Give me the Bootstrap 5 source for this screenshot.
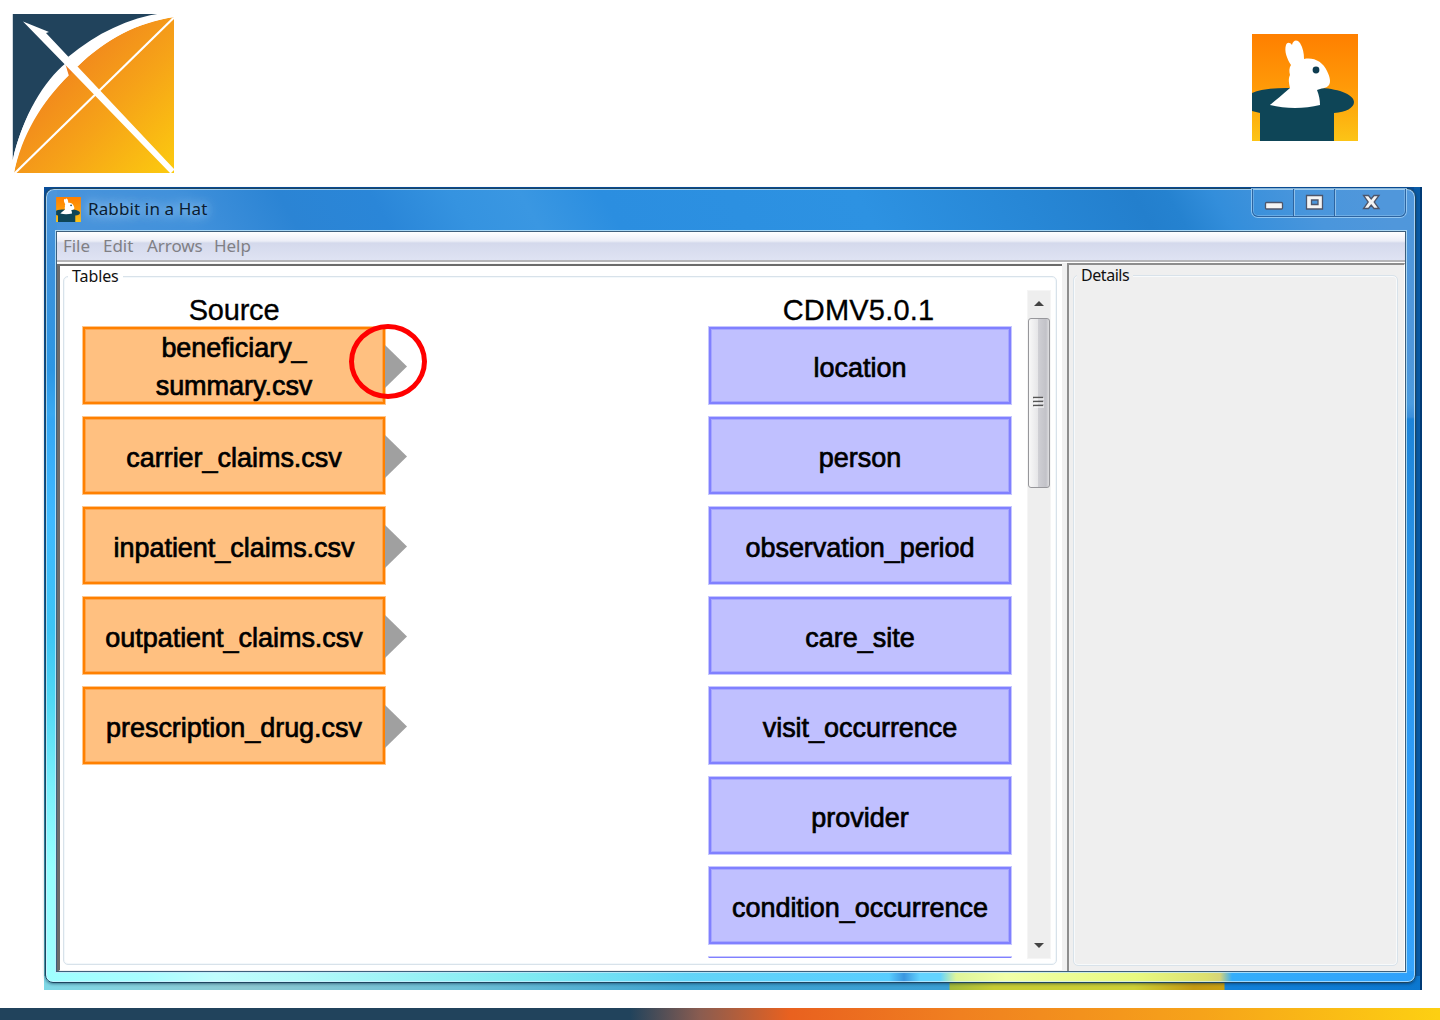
<!DOCTYPE html>
<html lang="en">
<head>
<meta charset="utf-8">
<title>Rabbit in a Hat</title>
<link href="https://cdn.jsdelivr.net/npm/bootstrap@5.3.0/dist/css/bootstrap.min.css" rel="stylesheet">
<script src="https://cdn.jsdelivr.net/npm/bootstrap@5.3.0/dist/js/bootstrap.bundle.min.js"></script>
<style>
body{width:1440px;height:1020px;font-family:"Noto Sans","Open Sans",sans-serif;background:#fff}
svg{display:block}
.slide-head{height:187px;padding:13px 80px 0 12px}
.logo-hat{margin-top:19px}
.desk{width:1378px;height:803px;margin-left:44px;padding:1px 6px 7px 1px;
 background:
  linear-gradient(90deg,transparent 1376px,#003a75 1376px),
  linear-gradient(90deg,transparent 0 905px,#a3b93a 906px,#c6cc33 950px,#cdd035 1090px,#c49a12 1150px,#c9a010 1180px,transparent 1181px) 0 100%/100% 14px no-repeat,
  linear-gradient(90deg,#7fd8e6,#8cc9d2 200px,#6cbfd6 420px,#3fa3cf 640px,#3a9fd4 900px,#1180d8 1190px,#0b77cf) 0 100%/100% 14px no-repeat,
  linear-gradient(90deg,transparent 1370px,#0a5ba5 1370px),
  linear-gradient(#0a4f9a,#0b61aa 45%,#2d87a8 75%,#5fb3c0)}
.win{width:1371px;height:795px;padding:0 9px 0 10px;border:1px solid #1d4560;border-radius:9px 9px 8px 8px;
 box-shadow:inset 0 0 0 1px rgba(215,240,255,.65),0 1px 3px rgba(0,30,60,.5);
 background:
  linear-gradient(90deg,#9fffff,#a8fdff 100px,#c0fdfd 170px,#b4fafa 250px,#7feaf2 480px,#62d4f8 640px,#58cdff 843px,#3a96e0 858px,#62d3ff 874px,#62d3ff 894px,#dff59a 910px,#f0ffa8 960px,#e8fa80 1090px,#dce070 1160px,#d6d478 1174px,#35aefb 1186px,#2ea0fb) 0 100%/100% 11px no-repeat,
  linear-gradient(#4d96db,#3f91da 60px,#2c96e4 180px,#38a8f2 225px,#34a6f4 230px,#3eb9ff 330px,#3cc4f5 440px,#4fd8f4 510px,#7af0fb 600px,#95ffff 680px,#a0ffff) 0 0/11px 100% no-repeat,
  linear-gradient(#5097db,#4f97db 170px,#4a9ce0 215px,#3a8fdc 228px,#1d84d9 230px,#2b96ea 420px,#2e9dfa 600px,#36a4fc) 100% 0/11px 100% no-repeat,
  linear-gradient(60deg,#4a94db 0,#4191db 130px,#2b84d4 220px,#2a86d8 300px,#3593e0 370px,#3a97e2 430px,#2b8ee0 500px,#2d92e2 720px,#2787d6 860px,#237fcd 960px,#2582d0 990px,#338edb 1030px,#4a96dc 1110px,#5097db 1170px) 0 0/100% 43px no-repeat}
.titlebar{height:42px;flex:none}
.win-title{font-size:17px;letter-spacing:.13px;line-height:24px;color:#0a1c30;margin:8px 0 0 7px;text-shadow:0 0 10px rgba(190,225,255,.9),0 0 16px rgba(190,225,255,.8)}
.caption-btns{height:28px;width:154px;border:1px solid #2d64a0;border-top:0;border-radius:0 0 6px 6px;box-shadow:0 0 0 1px rgba(170,215,250,.75),inset 0 0 0 1px rgba(150,200,240,.45)}
.client{height:741px;border:1px solid #3d5f7c;box-shadow:0 0 0 1px rgba(195,232,250,.8);background:#f6f6f6;overflow:hidden}
.menu-strip{height:28px;flex:none;padding-left:6px;font-size:17px;line-height:28px;color:#808085;background:linear-gradient(#fff,#eceef7 9px,#d4d9ec 11px,#dfe3f3)}
.menu-strip span{letter-spacing:-.05px;white-space:nowrap}
.menu-base{height:3px;flex:none;background:linear-gradient(#b5b5b8 2px,#fff 2px)}
.pane-l{width:1005px;background:#fff;border-left:3px solid #6b6b6b;border-top:2px solid #6b6b6b;border-bottom:2px solid #f1efef;margin-top:1px}
.splitter{width:5px;background:#f0f0f0}
.pane-r{background:#efefef;border-left:2px solid #8d8d8d;border-top:2px solid #8d8d8d;border-right:1px solid #fff;border-bottom:1px solid #fff}
.groupbox{border:1px solid #d8e2ea;border-radius:5px;box-shadow:inset 0 0 0 1px rgba(240,246,250,.8)}
.group-l{margin:10px 5px 5px 3px;padding:0 5px 5px 18px}
.group-r{margin:10px 6px 5px 4px;box-shadow:inset 0 0 0 1px #f8fafb}
.cap-text{position:absolute;top:-12px;left:4px;padding:0 4px;font-size:16px;line-height:22px;letter-spacing:-.45px;color:#111}
.group-l>.cap-text{background:linear-gradient(transparent 6px,#fff 6px);letter-spacing:-.1px}
.group-r>.cap-text{background:linear-gradient(transparent 6px,#efefef 6px);left:3px}
.map-col{width:304px;padding-top:16px;height:681px;font-family:"Liberation Sans",Arial,sans-serif;color:#000}
.map-cdm{overflow:hidden}
.map-src{width:326px;padding-right:22px}
.map-head{font-size:29px;line-height:35px;height:33px;letter-spacing:-.2px;-webkit-text-stroke:.3px #000}
.map-cdm>.map-head{letter-spacing:.2px;padding-right:3px}
.tbl-box{height:77px;margin:1px 1px 12px;flex:none;font-size:27px;letter-spacing:-.03px;line-height:38px;-webkit-text-stroke:.7px #000;padding-top:4px}
.tbl-src{background:#ffc080;border:2px solid #ff8000;box-shadow:0 0 0 1px rgba(255,128,0,.45),inset 0 0 0 1px rgba(255,128,0,.4)}
.tbl-cdm{background:#c0c0ff;border:2px solid #8080ff;box-shadow:0 0 0 1px rgba(128,128,255,.45),inset 0 0 0 1px rgba(128,128,255,.4)}
.tip{position:absolute;left:300px;top:16px;width:22px;height:43px;background:#a0a0a0;clip-path:polygon(0 0,100% 50%,0 100%)}
.ring{position:absolute;left:264px;top:-5px;width:78px;height:75px;border:5.5px solid #f00;border-radius:50%;z-index:2}
.scroller{width:24px;height:669px;margin:13px 0 0 15px;background:#eee;border:1px solid #f5f5f5}
.thumb{width:22px;height:170px;border:1.5px solid #97979b;border-radius:3px;background:linear-gradient(90deg,#f8f8f8,#e6e6e8 44%,#cfcfd4 46%,#c2c2c8 85%,#dedee0)}
.foot{height:12px;margin-top:18px;background:linear-gradient(90deg,#21435c 0,#21435c 630px,#8a5c50 700px,#e9611f 790px,#f08020 960px,#f6a31a 1200px,#fdd012 1440px)}
</style>
</head>
<body class="overflow-hidden d-flex flex-column">
<svg width="0" height="0" class="position-absolute">
 <defs>
  <linearGradient id="hatbg" x1="0" y1="0" x2="0" y2="1"><stop offset="0" stop-color="#ff7f00"/><stop offset=".5" stop-color="#ff9a08"/><stop offset="1" stop-color="#fcc416"/></linearGradient>
  <symbol id="hat" viewBox="0 0 106 107">
   <rect width="106" height="107" fill="url(#hatbg)"/>
   <path fill="#0e4557" d="M0 59C10 55 22 54 34 54H66C84 54 102 60 102 68C102 74 94 78 82 79V107H8V79L0 77Z"/>
   <path fill="#fff" d="M39 31C35 25 32 17 34 11C35 8 38 8 40 11C41 6 45 5 48 9C51 14 52 19 52 25C62 23 71 28 75 37C78 43 79 48 77 51C74 55 69 54 65 56C67 61 68 66 68 71C52 75 34 75 18 71C24 66 31 60 38 54C37 49 36 45 38 41C37 37 37 34 39 31Z"/>
   <circle cx="64" cy="36" r="3.4" fill="#0e3c50"/>
  </symbol>
 </defs>
</svg>

<header class="slide-head d-flex justify-content-between align-items-start flex-shrink-0">
 <svg width="163" height="161" viewBox="0 0 163 161">
  <defs><linearGradient id="bow" x1=".2" y1=".25" x2="1" y2="1"><stop offset="0" stop-color="#f07f1e"/><stop offset=".5" stop-color="#f6a318"/><stop offset="1" stop-color="#fccb0f"/></linearGradient></defs>
  <path fill="#21435c" d="M.8 1H151C75 17 18 70 .8 147Z"/>
  <path fill="url(#bow)" d="M2 160C10 122 29 90 57 62L53 50 66 53C94 26 126 9 162 4V160Z"/>
  <path fill="#fff" d="M.8 147C11 102 32 68 54 50L57 62C28 90 9 122 2 160ZM56 44C85 20 116 5 151 0H162V4C125 10 93 26 65 54Z"/>
  <path fill="#ef7d1e" d="M53 50L62 56 57 63Z"/>
  <path stroke="#fff" stroke-width="2.2" d="M2.500 160.500L162 4.500"/>
  <path fill="#fff" d="M11 8.500L37 19 34 20 162.500 156.500 158.500 160.500 50 48.500Z"/>
 </svg>
 <svg class="logo-hat" width="110" height="111" viewBox="-2 -2 110 111"><use href="#hat" width="106" height="107"/></svg>
</header>

<main class="desk flex-shrink-0">
 <div class="win d-flex flex-column">
  <div class="titlebar d-flex align-items-start">
   <svg class="mt-2" width="25" height="25"><use href="#hat" width="25" height="25"/></svg>
   <div class="win-title">Rabbit in a Hat</div>
   <div class="caption-btns ms-auto">
    <svg width="152" height="27" viewBox="1 0 152 27">
     <g stroke-width="1"><path stroke="#2d64a0" d="M41.500 0V27M82.500 0V27"/><path stroke="#8fc0ea" d="M42.500 0V27M83.500 0V27"/></g>
     <g fill="#f4f4f4" stroke="#4d566b" stroke-width="1.300">
      <rect x="13.500" y="13.500" width="17" height="6.500" rx="1"/>
      <path fill-rule="evenodd" d="M54.500 6.500H70.500V20H54.500ZM59.500 11V15.500H66V11Z"/>
      <path d="M111.500 6.500H116.500L119.200 10 122 6.500H127L122.200 13 127 19.500H122L119.200 16 116.500 19.500H111.500L116.200 13Z"/>
     </g>
    </svg>
   </div>
  </div>
  <div class="client d-flex flex-column">
   <nav class="menu-strip d-flex">
    <span style="width:40px">File</span><span style="width:44px">Edit</span><span style="width:67px">Arrows</span><span>Help</span>
   </nav>
   <div class="menu-base"></div>
   <div class="d-flex flex-grow-1">
    <section class="pane-l d-flex">
     <div class="groupbox group-l position-relative d-flex flex-grow-1">
      <span class="cap-text">Tables</span>
      <div class="map-col map-src d-flex flex-column text-center">
       <div class="map-head">Source</div>
       <div class="tbl-box tbl-src position-relative pt-0">beneficiary_<br>summary.csv<i class="tip"></i><i class="ring"></i></div>
       <div class="tbl-box tbl-src position-relative d-flex align-items-center justify-content-center">carrier_claims.csv<i class="tip"></i></div>
       <div class="tbl-box tbl-src position-relative d-flex align-items-center justify-content-center">inpatient_claims.csv<i class="tip"></i></div>
       <div class="tbl-box tbl-src position-relative d-flex align-items-center justify-content-center">outpatient_claims.csv<i class="tip"></i></div>
       <div class="tbl-box tbl-src position-relative d-flex align-items-center justify-content-center">prescription_drug.csv<i class="tip"></i></div>
      </div>
      <div class="map-col map-cdm d-flex flex-column text-center ms-auto">
       <div class="map-head">CDMV5.0.1</div>
       <div class="tbl-box tbl-cdm d-flex align-items-center justify-content-center">location</div>
       <div class="tbl-box tbl-cdm d-flex align-items-center justify-content-center">person</div>
       <div class="tbl-box tbl-cdm d-flex align-items-center justify-content-center">observation_period</div>
       <div class="tbl-box tbl-cdm d-flex align-items-center justify-content-center">care_site</div>
       <div class="tbl-box tbl-cdm d-flex align-items-center justify-content-center">visit_occurrence</div>
       <div class="tbl-box tbl-cdm d-flex align-items-center justify-content-center">provider</div>
       <div class="tbl-box tbl-cdm d-flex align-items-center justify-content-center">condition_occurrence</div>
       <div class="tbl-box tbl-cdm"></div>
      </div>
      <div class="scroller d-flex flex-column justify-content-between">
       <div>
        <svg width="22" height="27"><path fill="#444" d="M6 15L11 10 16 15Z"/></svg>
        <div class="thumb d-flex align-items-center justify-content-center">
         <svg width="12" height="14"><path stroke="#555" stroke-width="1.500" d="M0 1.500H10M0 5.500H10M0 9.500H10"/><path stroke="#fff" d="M1 3H11M1 7H11M1 11H11"/></svg>
        </div>
       </div>
       <svg width="22" height="18"><path fill="#444" d="M6 3L11 8 16 3Z"/></svg>
      </div>
     </div>
    </section>
    <div class="splitter"></div>
    <section class="pane-r d-flex flex-grow-1">
     <div class="groupbox group-r position-relative flex-grow-1"><span class="cap-text">Details</span></div>
    </section>
   </div>
  </div>
 </div>
</main>
<footer class="foot flex-shrink-0"></footer>
</body>
</html>
